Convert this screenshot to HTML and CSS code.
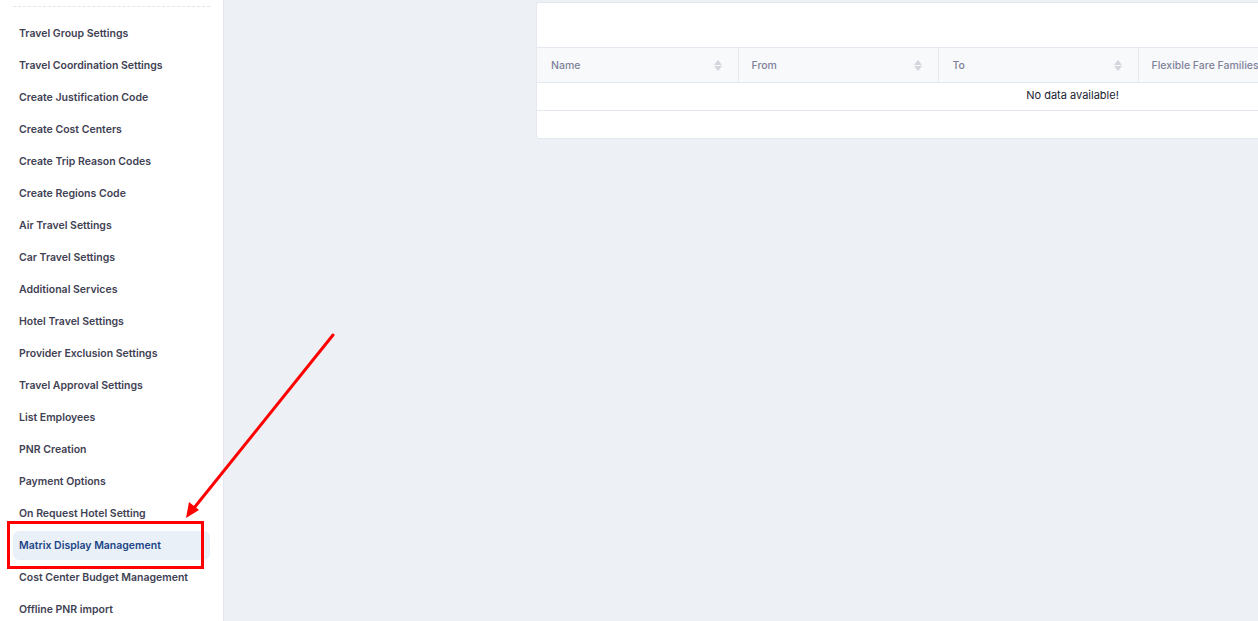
FILE: index.html
```html
<!DOCTYPE html>
<html lang="en">
<head>
<meta charset="utf-8">
<title>Matrix Display Management</title>
<link rel="stylesheet" href="styles.css">
</head>
<body>
<div class="layout">
  <aside class="sidebar">
    <div class="divider"></div>
    <nav class="menu">
      <a class="item">Travel Group Settings</a>
      <a class="item">Travel Coordination Settings</a>
      <a class="item">Create Justification Code</a>
      <a class="item">Create Cost Centers</a>
      <a class="item">Create Trip Reason Codes</a>
      <a class="item">Create Regions Code</a>
      <a class="item">Air Travel Settings</a>
      <a class="item">Car Travel Settings</a>
      <a class="item">Additional Services</a>
      <a class="item">Hotel Travel Settings</a>
      <a class="item">Provider Exclusion Settings</a>
      <a class="item">Travel Approval Settings</a>
      <a class="item">List Employees</a>
      <a class="item">PNR Creation</a>
      <a class="item">Payment Options</a>
      <a class="item">On Request Hotel Setting</a>
      <a class="item active">Matrix Display Management<span class="highlight"></span></a>
      <a class="item">Cost Center Budget Management</a>
      <a class="item">Offline PNR import</a>
    </nav>
  </aside>
  <main class="main">
    <section class="card">
      <div class="card-head"></div>
      <table class="table">
        <colgroup>
          <col class="c1"><col class="c2"><col class="c2"><col class="c2"><col>
        </colgroup>
        <thead>
          <tr>
            <th><span class="th-inner">Name<span class="sort"></span></span></th>
            <th class="pad13"><span class="th-inner">From<span class="sort"></span></span></th>
            <th><span class="th-inner">To<span class="sort"></span></span></th>
            <th class="pad13"><span class="th-inner">Flexible Fare Families<span class="sort"></span></span></th>
            <th><span class="th-inner">&nbsp;</span></th>
          </tr>
        </thead>
        <tbody>
          <tr><td colspan="5" class="empty">No data available!</td></tr>
        </tbody>
      </table>
      <div class="card-foot"></div>
    </section>
  </main>
</div>
<svg class="arrow" width="1258" height="621" viewBox="0 0 1258 621">
  <line x1="333" y1="335" x2="194" y2="508" stroke="#ff0000" stroke-width="3" stroke-linecap="round"/>
  <polygon points="186,518 189,502 199,510" fill="#ff0000"/>
</svg>
</body>
</html>
```
FILE: styles.css
```css
html, body {
  margin: 0;
  padding: 0;
  height: 100%;
  overflow: hidden;
}
body {
  font-family: Inter, "Noto Sans", sans-serif;
  background: #edf1f6;
  position: relative;
}
.layout {
  display: flex;
  height: 621px;
}
.sidebar {
  width: 224px;
  flex: none;
  background: #ffffff;
  border-right: 1px solid #e3e7ee;
  padding: 6px 13px 0 13px;
  box-sizing: border-box;
}
.divider {
  border-top: 1px dashed #e1e5ec;
}
.menu {
  display: flex;
  flex-direction: column;
  gap: 3px;
  padding-top: 12px;
}
.item {
  position: relative;
  display: flex;
  align-items: center;
  height: 29px;
  padding-left: 6px;
  font-size: 10.5px;
  font-weight: 600;
  color: #3f4254;
  border-radius: 6px;
  white-space: nowrap;
}
.item.active {
  background: #e9f0f8;
  color: #1c4587;
}
.highlight {
  position: absolute;
  left: -6px;
  top: -10px;
  width: 191px;
  height: 42px;
  border: 3px solid #ff0000;
}
.main {
  flex: 1;
  min-width: 0;
  overflow: hidden;
  padding: 2px 0 0 312px;
}
.card {
  width: 1071px;
  background: #ffffff;
  border: 1px solid #e4e8ef;
  border-radius: 3px;
}
.card-head {
  height: 44px;
}
.table {
  width: 100%;
  border-collapse: collapse;
  table-layout: fixed;
  font-size: 11px;
}
.c1 { width: 201px; }
.c2 { width: 200px; }
.table th {
  box-sizing: border-box;
  height: 35px;
  background: #f8f9fb;
  border-top: 1px solid #e4e8ef;
  border-bottom: 1px solid #e4e8ef;
  border-right: 1px solid #e4e8ef;
  padding: 0 16px 0 14px;
  text-align: left;
  font-size: 10.5px;
  font-weight: 500;
  color: #7e8299;
  white-space: nowrap;
  overflow: hidden;
}
.table th.pad13 {
  padding-left: 13px;
}
.table th:last-child {
  border-right: none;
}
.th-inner {
  display: flex;
  align-items: center;
  justify-content: space-between;
}
.sort {
  display: flex;
  flex-direction: column;
  gap: 1px;
}
.sort::before, .sort::after {
  content: "";
  display: block;
  width: 0;
  height: 0;
  border-left: 4.5px solid transparent;
  border-right: 4.5px solid transparent;
}
.sort::before {
  border-bottom: 5px solid #d3d6dc;
}
.sort::after {
  border-top: 5px solid #d3d6dc;
}
.empty {
  height: 28px;
  text-align: center;
  color: #181c32;
  font-weight: 400;
  border-bottom: 1px solid #e4e8ef;
  padding: 0 0 4px 0;
  box-sizing: border-box;
}
.card-foot {
  height: 27px;
}
.arrow {
  position: absolute;
  left: 0;
  top: 0;
  pointer-events: none;
}
```
